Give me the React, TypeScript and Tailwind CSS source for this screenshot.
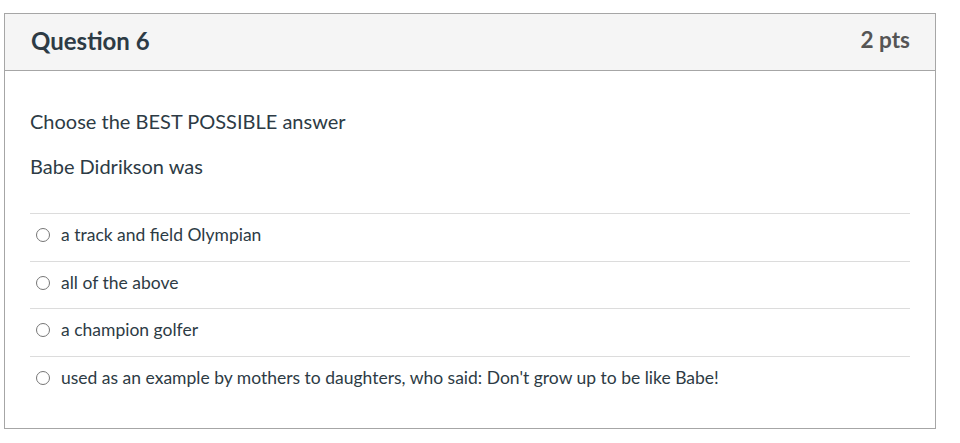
const answers = [
  'a track and field Olympian',
  'all of the above',
  'a champion golfer',
  "used as an example by mothers to daughters, who said: Don't grow up to be like Babe!",
]

export default function App() {
  return (
    <div className="min-h-screen bg-white pt-[13px] pl-[4px] text-[#2d3b45]" style={{ fontFamily: 'Lato, "Noto Sans", sans-serif' }}>
      <div className="w-[932px] border border-[#a6a6a6]">
        <div className="flex h-[57px] items-center justify-between border-b border-[#a6a6a6] bg-[#f5f5f5] pl-[26px] pr-[25px]">
          <h2 className="mb-[2px] text-[24px] font-bold leading-none">Question 6</h2>
          <span className="mb-[3px] text-[22.5px] font-bold leading-none text-[#555]">2 pts</span>
        </div>

        <div className="px-[25px] pt-[36px] pb-[25px]">
          <p className="text-[20px] leading-[28px]">Choose the BEST POSSIBLE answer</p>
          <p className="mt-[17px] text-[20px] leading-[28px]">Babe Didrikson was</p>

          <div className="mt-[33px]">
            {answers.map((a) => (
              <label key={a} className="flex h-[47.5px] items-center border-t border-[#dcdcdc] pb-[4px] pl-[6px] text-[17.5px]">
                <span className="mr-[11px] h-[14px] w-[14px] shrink-0 rounded-full border border-[#767676] bg-white" />
                <span>{a}</span>
              </label>
            ))}
          </div>
        </div>
      </div>
    </div>
  )
}
